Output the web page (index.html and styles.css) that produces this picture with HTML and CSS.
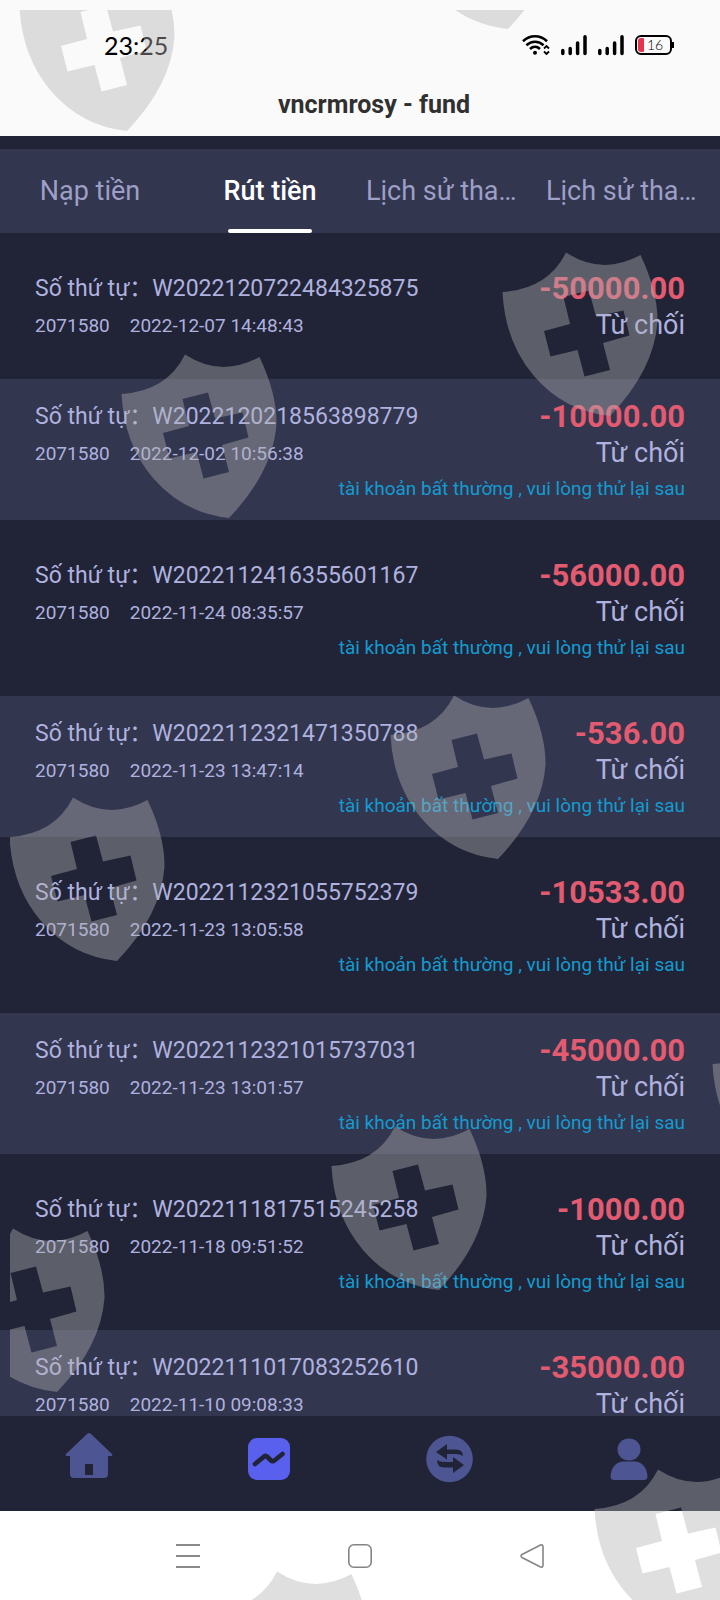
FILE: index.html
```html
<!DOCTYPE html>
<html lang="vi">
<head>
    <meta charset="UTF-8">
    <meta name="viewport" content="width=device-width, initial-scale=1.0">
    <title>vncrmrosy - fund</title>
    <link rel="stylesheet" href="styles.css">
</head>
<body>

    <div class="phone">
        <header class="header">
            <div class="status">
                <span class="clock">23:25</span>
                <div class="status-icons">
                    <!-- wifi -->
                    <svg width="28" height="22" viewBox="0 0 28 22" fill="none" stroke="#000" stroke-width="2.6">
                        <path d="M1 7.2C8 .6 18 .6 25 7.2"/>
                        <path d="M4.4 11.2c5-4.6 12.2-4.6 17.2 0"/>
                        <path d="M8 15c3-2.8 7-2.8 10 0"/>
                        <circle cx="13" cy="18.8" r="2" fill="#000" stroke="none"/>
                        <path d="M22 14.5l2.500-2.500 2.500 2.500M22 17.500l2.500 2.500 2.500-2.500" stroke-width="1.8"/>
                    </svg>
                    <svg width="26" height="22" viewBox="0 0 26 22" stroke="#000" stroke-width="3.500" stroke-linecap="round">
                        <path d="M1.800 16.600v2.800M9.200 14.600v4.800M16.600 9.100v10.300M24 2.800v16.600"/>
                    </svg>
                    <svg width="26" height="22" viewBox="0 0 26 22" stroke="#000" stroke-width="3.500" stroke-linecap="round">
                        <path d="M1.800 16.600v2.800M9.200 14.600v4.800M16.600 9.100v10.300M24 2.800v16.600"/>
                    </svg>
                    <div class="battery"><span class="battery-level"></span>16</div>
                </div>
            </div>
            <h1 class="title">vncrmrosy - fund</h1>
        </header>

        <nav class="tabs">
            <a class="tab" href="#">Nạp tiền</a>
            <a class="tab active" href="#">Rút tiền</a>
            <a class="tab tab-long" href="#">Lịch sử tha…</a>
            <a class="tab tab-long" href="#">Lịch sử tha…</a>
        </nav>

        <main class="records">
            <div class="record">
                <div class="line">
                    <span class="order"><span>Số thứ tự：</span><span>W2022120722484325875</span></span>
                    <span class="amount">-50000.00</span>
                </div>
                <div class="line">
                    <span class="meta"><span>2071580</span><span>2022-12-07 14:48:43</span></span>
                    <span class="state">Từ chối</span>
                </div>
            </div>

            <div class="record">
                <div class="line">
                    <span class="order"><span>Số thứ tự：</span><span>W2022120218563898779</span></span>
                    <span class="amount">-10000.00</span>
                </div>
                <div class="line">
                    <span class="meta"><span>2071580</span><span>2022-12-02 10:56:38</span></span>
                    <span class="state">Từ chối</span>
                </div>
                <p class="remark">tài khoản bất thường , vui lòng thử lại sau</p>
            </div>

            <div class="record">
                <div class="line">
                    <span class="order"><span>Số thứ tự：</span><span>W2022112416355601167</span></span>
                    <span class="amount">-56000.00</span>
                </div>
                <div class="line">
                    <span class="meta"><span>2071580</span><span>2022-11-24 08:35:57</span></span>
                    <span class="state">Từ chối</span>
                </div>
                <p class="remark">tài khoản bất thường , vui lòng thử lại sau</p>
            </div>

            <div class="record">
                <div class="line">
                    <span class="order"><span>Số thứ tự：</span><span>W2022112321471350788</span></span>
                    <span class="amount">-536.00</span>
                </div>
                <div class="line">
                    <span class="meta"><span>2071580</span><span>2022-11-23 13:47:14</span></span>
                    <span class="state">Từ chối</span>
                </div>
                <p class="remark">tài khoản bất thường , vui lòng thử lại sau</p>
            </div>

            <div class="record">
                <div class="line">
                    <span class="order"><span>Số thứ tự：</span><span>W2022112321055752379</span></span>
                    <span class="amount">-10533.00</span>
                </div>
                <div class="line">
                    <span class="meta"><span>2071580</span><span>2022-11-23 13:05:58</span></span>
                    <span class="state">Từ chối</span>
                </div>
                <p class="remark">tài khoản bất thường , vui lòng thử lại sau</p>
            </div>

            <div class="record">
                <div class="line">
                    <span class="order"><span>Số thứ tự：</span><span>W2022112321015737031</span></span>
                    <span class="amount">-45000.00</span>
                </div>
                <div class="line">
                    <span class="meta"><span>2071580</span><span>2022-11-23 13:01:57</span></span>
                    <span class="state">Từ chối</span>
                </div>
                <p class="remark">tài khoản bất thường , vui lòng thử lại sau</p>
            </div>

            <div class="record">
                <div class="line">
                    <span class="order"><span>Số thứ tự：</span><span>W2022111817515245258</span></span>
                    <span class="amount">-1000.00</span>
                </div>
                <div class="line">
                    <span class="meta"><span>2071580</span><span>2022-11-18 09:51:52</span></span>
                    <span class="state">Từ chối</span>
                </div>
                <p class="remark">tài khoản bất thường , vui lòng thử lại sau</p>
            </div>

            <div class="record">
                <div class="line">
                    <span class="order"><span>Số thứ tự：</span><span>W2022111017083252610</span></span>
                    <span class="amount">-35000.00</span>
                </div>
                <div class="line">
                    <span class="meta"><span>2071580</span><span>2022-11-10 09:08:33</span></span>
                    <span class="state">Từ chối</span>
                </div>
            </div>
        </main>

        <nav class="app-nav">
            <a href="#" aria-label="Home">
                <svg width="48" height="48" viewBox="1 2 48 48" fill="#4e5593" overflow="visible">
                    <path fill-rule="evenodd" d="M24 0Q25 0 26 1L47 21Q48 23 46 23H43V41Q43 45 39 45H9Q5 45 5 41V23H2Q0 23 1 21L22 1Q23 0 24 0zM20 31V42H28V31z"/>
                </svg>
            </a>
            <a href="#" aria-label="Fund">
                <svg width="48" height="48" viewBox="0 0 48 48" fill="none">
                    <rect x="2" y="3" width="42" height="42" rx="9" fill="#5a60ee"/>
                    <path d="M9 29L17.500 22Q19.500 20 21.500 22L24.500 25Q26.500 27 28.500 25.500L36.500 19" stroke="#212437" stroke-width="4.600" stroke-linecap="round"/>
                </svg>
            </a>
            <a href="#" aria-label="Transfer">
                <svg width="48" height="48" viewBox="0 0 48 48">
                    <circle cx="23.500" cy="24" r="23.300" fill="#4e5593"/>
                    <path fill="#212437" d="M10 17L21 9V14.500H30Q37 14.500 37 21Q34 19 30 19H21V24.500zM38 30L27 22V27H18Q14 27 11 25Q11 32.500 18 32.500H27V38z"/>
                </svg>
            </a>
            <a href="#" aria-label="Account">
                <svg width="48" height="48" viewBox="0 0 48 48" fill="#4e5593">
                    <ellipse cx="23" cy="14.500" rx="11.500" ry="11"/>
                    <path d="M8 45Q4.500 45 4.500 41Q6 27 18 26.500H28Q40 27 41.500 41Q41.500 45 38 45z"/>
                </svg>
            </a>
        </nav>

        <div class="system-nav">
            <button type="button" aria-label="Recent apps">
                <svg width="26" height="26" viewBox="0 0 26 26" stroke="#8a8a8a" stroke-width="2"><path d="M1 2h24M1 13h24M1 24h24"/></svg>
            </button>
            <button type="button" aria-label="Home screen">
                <svg width="26" height="26" viewBox="0 0 26 26" fill="none" stroke="#858585" stroke-width="1.600"><rect x="1.800" y="1.800" width="22.400" height="22.400" rx="5"/></svg>
            </button>
            <button type="button" aria-label="Back">
                <svg width="26" height="26" viewBox="0 0 26 26" fill="none" stroke="#858585" stroke-width="1.600"><path d="M3 11.500L21 2.200Q24 1 24 4V22Q24 25 21 23.800L3 14.500Q1 13 3 11.500z"/></svg>
            </button>
        </div>

        <!-- shields over the whole screen -->
        <svg class="watermark" aria-hidden="true">
            <defs>
                <path id="shield" fill-rule="evenodd" d="M.5 40Q46 37 64 .5Q100 24 138.500 3Q156 40 155.500 70Q152 118 108 164Q62 159 32 124Q3 90 .5 40z
                    M61.500 45L68 72L42 79L48.500 104.500L75.500 98L82.500 124.500L108 118L101 91L127.500 83.500L121.500 58.500L94 64.500L87 38.500z"/>
            </defs>
            <use href="#shield" x="9" y="-43"/>
            <use href="#shield" x="390" y="-145"/>
            <use href="#shield" x="492" y="242"/>
            <use href="#shield" x="111" y="344"/>
            <use href="#shield" x="380" y="685"/>
            <use href="#shield" x="-1" y="787"/>
            <use href="#shield" x="702" y="1014"/>
            <use href="#shield" x="321" y="1116"/>
            <use href="#shield" x="-61" y="1218"/>
            <use href="#shield" x="584" y="1459"/>
            <use href="#shield" x="203" y="1561"/>
        </svg>
    </div>

</body>
</html>
```
FILE: styles.css
```css
* {
    box-sizing: border-box;
}
body {
    margin: 0;
    background-color: #212437;
    font-family: Roboto, "Noto Sans CJK SC", sans-serif;
}
a {
    text-decoration: none;
}
.phone {
    position: relative;
    display: flex;
    flex-direction: column;
    height: 100vh;
    overflow: hidden;
}

/* Status bar and page title */
.header {
    padding: 24px 0 11px;
    background-color: #fafafa;
}
.status {
    display: flex;
    justify-content: space-between;
    align-items: center;
    height: 41px;
    padding: 0 48px 0 104px;
}
.clock {
    font-family: Lato, sans-serif;
    font-size: 25px;
    line-height: 40px;
    color: #000;
}
.status-icons {
    display: flex;
    align-items: center;
    gap: 11px;
}
.battery {
    position: relative;
    width: 37px;
    height: 20px;
    padding-left: 10px;
    border: 2px solid #000;
    border-radius: 6px;
    font-family: Lato, sans-serif;
    font-size: 14px;
    font-weight: 300;
    line-height: 16px;
}
.battery::after {
    content: "";
    position: absolute;
    top: 5px;
    right: -4px;
    width: 2px;
    height: 6px;
    background-color: #000;
}
.battery-level {
    position: absolute;
    top: 1px;
    left: 1px;
    width: 6px;
    height: 14px;
    border-radius: 3px 1px 1px 3px;
    background-color: #e5344d;
}
.title {
    margin: 20px 0 0;
    padding-left: 28px;
    font-size: 25px;
    line-height: 40px;
    font-weight: 700;
    text-align: center;
    color: #303030;
}

/* Tabs */
.tabs {
    display: grid;
    grid-template-columns: repeat(4, 1fr);
    margin-top: 13px;
    background-color: #32364f;
}
.tab {
    display: flex;
    flex-direction: column;
    align-items: center;
    height: 84px;
    padding-top: 22px;
    font-size: 27px;
    line-height: 40px;
    white-space: nowrap;
    color: #9d9fc6;
}
.tab-long {
    align-items: flex-start;
    padding-left: 6px;
}
.tab.active {
    font-weight: 500;
    color: #fff;
}
.tab.active::after {
    content: "";
    width: 84px;
    height: 4px;
    margin-top: auto;
    border-radius: 2px;
    background-color: #fff;
}

/* Withdrawal records */
.records {
    flex: 1;
    min-height: 0;
    overflow: hidden;
}
.record {
    padding: 19px 35px 18px;
    color: #afb1df;
}
.record:nth-child(odd) {
    padding: 37px 35px 35px;
}
.record:nth-child(even) {
    background-color: #32364f;
}
.line {
    display: flex;
    justify-content: space-between;
    height: 37px;
    line-height: 37px;
}
.order {
    display: flex;
    font-size: 23px;
}
.meta {
    display: flex;
    gap: 20px;
    font-size: 19px;
}
.amount {
    font-size: 31px;
    font-weight: 700;
    color: #e35b70;
}
.state {
    font-size: 27px;
}
.remark {
    margin: 4px 0 0;
    font-size: 19px;
    line-height: 26px;
    text-align: right;
    color: #149bd0;
}

/* Bottom bars */
.app-nav {
    display: grid;
    grid-template-columns: repeat(4, 1fr);
    justify-items: center;
    padding: 19px 0 28px;
    background-color: #212437;
}
.app-nav svg {
    display: block;
}
.system-nav {
    display: grid;
    grid-template-columns: repeat(3, 1fr);
    height: 89px;
    padding: 0 102px;
    background-color: #fff;
}
.system-nav button {
    padding: 0;
    border: 0;
    background: none;
}
.system-nav svg {
    vertical-align: middle;
}

.watermark {
    position: absolute;
    top: 10px;
    left: 10px;
    width: calc(100% - 10px);
    height: calc(100% - 10px);
    fill: rgba(178, 178, 178, 0.41);
    pointer-events: none;
}
```
